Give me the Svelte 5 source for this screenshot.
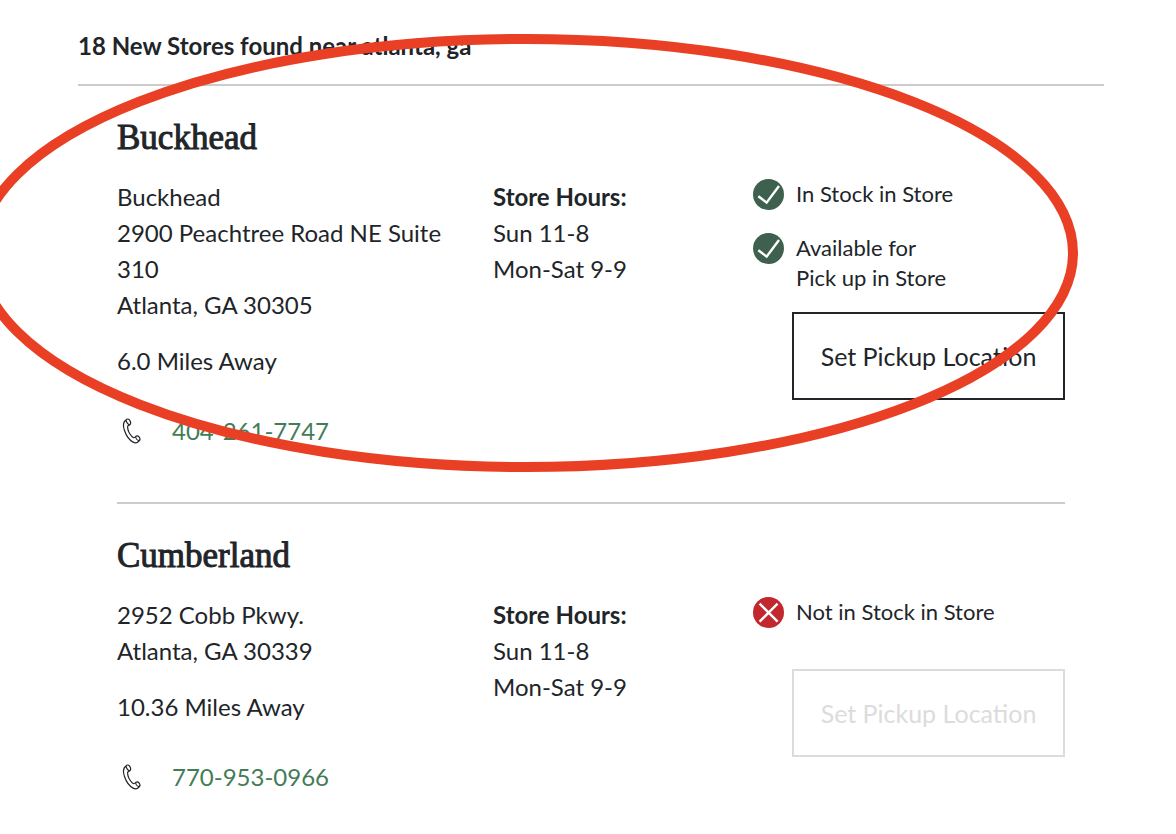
<script lang="ts">
  const stores = [
    {
      name: 'Buckhead',
      address: ['Buckhead', '2900 Peachtree Road NE Suite 310', 'Atlanta, GA 30305'],
      distance: '6.0',
      phone: '404-261-7747',
      hours: ['Sun 11-8', 'Mon-Sat 9-9'],
      statuses: [['In Stock in Store'], ['Available for', 'Pick up in Store']],
      available: true
    },
    {
      name: 'Cumberland',
      address: ['2952 Cobb Pkwy.', 'Atlanta, GA 30339'],
      distance: '10.36',
      phone: '770-953-0966',
      hours: ['Sun 11-8', 'Mon-Sat 9-9'],
      statuses: [['Not in Stock in Store']],
      available: false
    }
  ]

  let pickup = $state('')
</script>

<main class="page">
  <h1 class="summary">18 New Stores found near atlanta, ga</h1>

  {#each stores as store}
    <section class="store">
      <h2 class="name">{store.name}</h2>
      <div class="columns">
        <div class="details">
          <address>
            {#each store.address as line}
              <div>{line}</div>
            {/each}
          </address>
          <p class="distance">{store.distance} Miles Away</p>
          <p class="phone">
            <svg width="20" height="26" viewBox="0 0 20 26" fill="none" stroke="#212529" stroke-width="1.2" stroke-linejoin="round" aria-hidden="true">
              <path d="M4 1.9 C1.3 3.6 .9 7.6 2.4 12.3 C4 17.2 7 21.9 11.1 24.1 C13.6 25.4 16.3 24.8 17.3 22.6 M13.6 18.5 C12.4 20 11.2 20 9.8 18.4 C7.5 15.9 5.7 12 5.6 9 C5.6 7.6 6.2 7.1 7.6 6.9" />
              <path d="M4 1.9 C4.8 .7 6.6 .7 7.6 2.1 C8.7 3.7 8.9 5.9 7.6 6.9 C6 6.6 4.2 4.2 4 1.9 M13.6 18.5 C14.7 17.6 16.1 17.8 17.1 19 C18.2 20.4 18.3 21.7 17.3 22.6 C15.6 22.6 13.8 20.8 13.6 18.5" />
            </svg>
            <a href="tel:{store.phone}">{store.phone}</a>
          </p>
        </div>

        <div class="hours">
          <strong>Store Hours:</strong>
          {#each store.hours as line}
            <div>{line}</div>
          {/each}
        </div>

        <div class="availability">
          <ul>
            {#each store.statuses as status}
              <li>
                <svg width="31" height="31" viewBox="0 0 31 31" fill="none" stroke="#fff" stroke-width="2.4" aria-hidden="true">
                  {#if store.available}
                    <circle cx="15.5" cy="15.5" r="15.5" fill="#3e604f" stroke="none" />
                    <path d="M5.3 17.2 L13.6 23.6 L26 7" />
                  {:else}
                    <circle cx="15.5" cy="15.5" r="15.5" fill="#c1272d" stroke="none" />
                    <path d="M6.6 6.6 L24.6 24.6 M24.6 6.6 L6.6 24.6" />
                  {/if}
                </svg>
                <span>
                  {#each status as line}
                    <span class="line">{line}</span>
                  {/each}
                </span>
              </li>
            {/each}
          </ul>
          <button disabled={!store.available} onclick={() => (pickup = store.name)}>
            Set Pickup Location
          </button>
        </div>
      </div>
    </section>
  {/each}

  <!-- marker around the first store -->
  <svg class="marker" viewBox="0 0 1176 500" aria-hidden="true">
    <ellipse cx="526" cy="253" rx="547" ry="214" fill="none" stroke="#e94025" stroke-width="10" />
  </svg>
</main>

<style>
  :global(body) {
    margin: 0;
    background: #fff;
  }

  .page {
    position: relative;
    overflow: hidden;
    padding: 28px 72px 0 78px;
    font-family: Lato, 'Liberation Sans', sans-serif;
    font-size: 24px;
    line-height: 36px;
    color: #212529;
  }

  .summary {
    margin: 0;
    padding-bottom: 20px;
    border-bottom: 2px solid #ccc;
    font-size: 24px;
    font-weight: 700;
  }

  .store {
    margin: 0 39px;
    padding: 32px 0 53px;
  }

  .store + .store {
    border-top: 2px solid #ccc;
    padding-bottom: 36px;
  }

  .name {
    margin: 0 0 21px;
    font-family: 'Liberation Serif', serif;
    font-size: 35px;
    font-weight: 400;
    line-height: 40px;
    -webkit-text-stroke: 1px #212529;
  }

  .columns {
    display: grid;
    grid-template-columns: 376fr 260fr 312fr;
  }

  .details {
    padding-right: 24px;
  }

  address {
    font-style: normal;
  }

  .distance {
    margin: 20px 0 34px;
  }

  .phone {
    display: flex;
    align-items: center;
    gap: 30px;
    margin: 0;
    padding-left: 5px;
  }

  .phone a {
    color: #437c58;
    text-decoration: none;
  }

  .availability {
    display: flex;
    flex-direction: column;
    justify-content: flex-start;
  }

  ul {
    display: flex;
    flex-direction: column;
    gap: 23px;
    margin: 0;
    padding: 0;
    list-style: none;
    font-size: 22px;
    line-height: 30px;
  }

  li {
    display: flex;
    align-items: flex-start;
    gap: 12px;
  }

  li svg {
    flex: none;
  }

  .line {
    display: block;
  }

  button {
    margin: 19px 0 0 39px;
    padding: 24px 0;
    border: 2px solid #212529;
    background: transparent;
    color: #212529;
    font: inherit;
    font-size: 25px;
    cursor: pointer;
  }

  button:disabled {
    margin-top: 41px;
    border-color: #dcdcdc;
    color: #dcdcdc;
    cursor: default;
  }

  .marker {
    position: absolute;
    top: 0;
    left: 0;
    width: 100%;
    pointer-events: none;
  }
</style>
